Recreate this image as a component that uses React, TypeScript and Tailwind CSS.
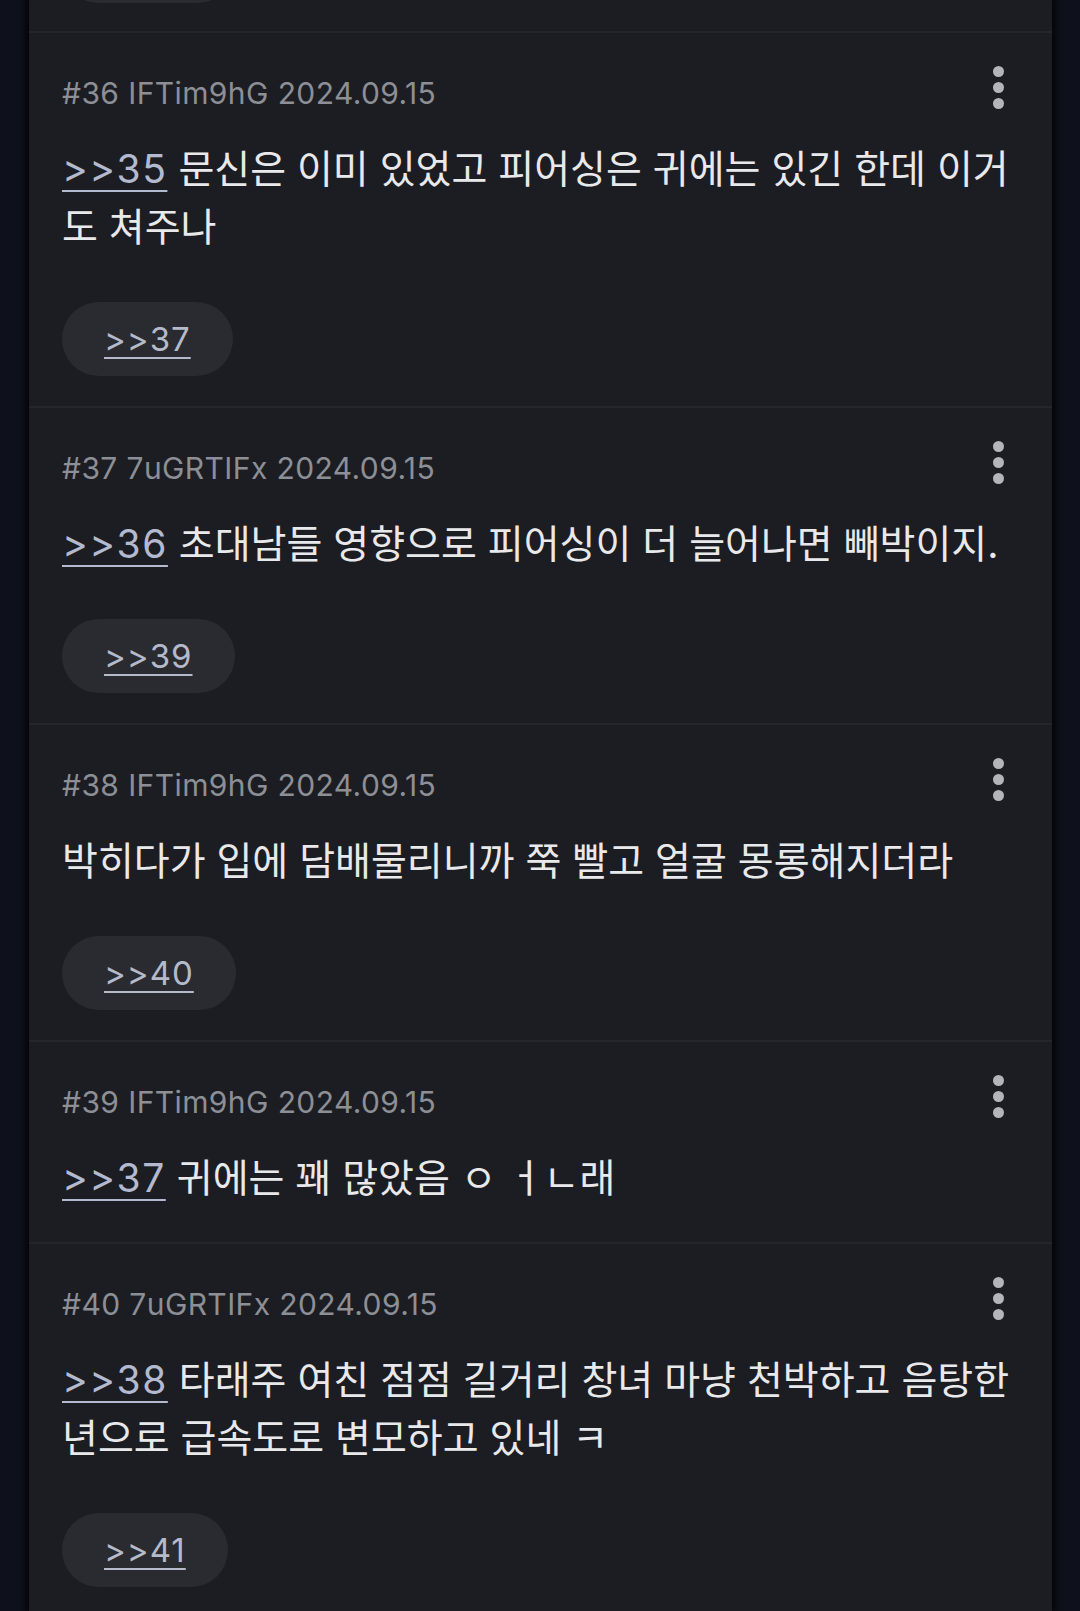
import React from "react";

type Post = {
  no: number;
  id: string;
  ref?: string;
  lines: string[];
  reply?: string;
};

const posts: Post[] = [
  { no: 36, id: "IFTim9hG", ref: ">>35", lines: ["문신은 이미 있었고 피어싱은 귀에는 있긴 한데 이거", "도 쳐주나"], reply: ">>37" },
  { no: 37, id: "7uGRTIFx", ref: ">>36", lines: ["초대남들 영향으로 피어싱이 더 늘어나면 빼박이지."], reply: ">>39" },
  { no: 38, id: "IFTim9hG", lines: ["박히다가 입에 담배물리니까 쭉 빨고 얼굴 몽롱해지더라"], reply: ">>40" },
  { no: 39, id: "IFTim9hG", ref: ">>37", lines: ["귀에는 꽤 많았음 ㅇ ㅓㄴ래"] },
  { no: 40, id: "7uGRTIFx", ref: ">>38", lines: ["타래주 여친 점점 길거리 창녀 마냥 천박하고 음탕한", "년으로 급속도로 변모하고 있네 ㅋ"], reply: ">>41" },
];

const font = { fontFamily: "Inter, 'Noto Sans CJK KR', sans-serif" };

function Dots() {
  return (
    <div className="flex flex-col items-center gap-[5px]">
      <span className="block w-[11px] h-[11px] rounded-full bg-[#b4b5ba]" />
      <span className="block w-[11px] h-[11px] rounded-full bg-[#b4b5ba]" />
      <span className="block w-[11px] h-[11px] rounded-full bg-[#b4b5ba]" />
    </div>
  );
}

function Pill({ label }: { label: string }) {
  return (
    <div className="flex items-center h-[74px] rounded-full bg-[#2a2b30] px-[42px]">
      <span className="text-[33px] leading-none tracking-[1px] text-[#b5bacb] underline decoration-2 underline-offset-[6px]">
        {label}
      </span>
    </div>
  );
}

function PostItem({ p }: { p: Post }) {
  return (
    <div className="border-t-2 border-[#25262b] pl-[33px] pr-[48px] pt-[33px]">
      <div className="flex justify-between items-start">
        <div className="mt-[9px] text-[30px] leading-[36px] text-[#8c8f95] tracking-[0.4px]">
          #{p.no} {p.id} 2024.09.15
        </div>
        <Dots />
      </div>
      <div className={`mt-[29px] text-[39px] leading-[58px] text-[#e9e9eb] ${p.reply ? "pb-[46px]" : "pb-[35px]"}`}>
        {p.lines.map((l, i) => (
          <div key={i} className="whitespace-nowrap">
            {i === 0 && p.ref ? (
              <>
                <span className="text-[#b3bad0] tracking-[1.5px] underline decoration-2 underline-offset-[7px]">{p.ref}</span>{" "}
              </>
            ) : null}
            {l}
          </div>
        ))}
      </div>
      {p.reply ? (
        <div className="flex pb-[30px]">
          <Pill label={p.reply} />
        </div>
      ) : null}
    </div>
  );
}

export default function App() {
  return (
    <div className="w-[1080px] h-[1611px] overflow-hidden bg-[#0e111b]" style={font}>
      <div className="ml-[29px] w-[1023px] h-full bg-[#1c1d22] shadow-[0_0_7px_3px_rgba(0,0,0,0.85)]">
        <div className="h-[31px] overflow-hidden pl-[33px]">
          <div className="mt-[-71px] w-[172px] h-[74px] rounded-full bg-[#2a2b30]" />
        </div>
        {posts.map((p) => (
          <PostItem key={p.no} p={p} />
        ))}
      </div>
    </div>
  );
}
